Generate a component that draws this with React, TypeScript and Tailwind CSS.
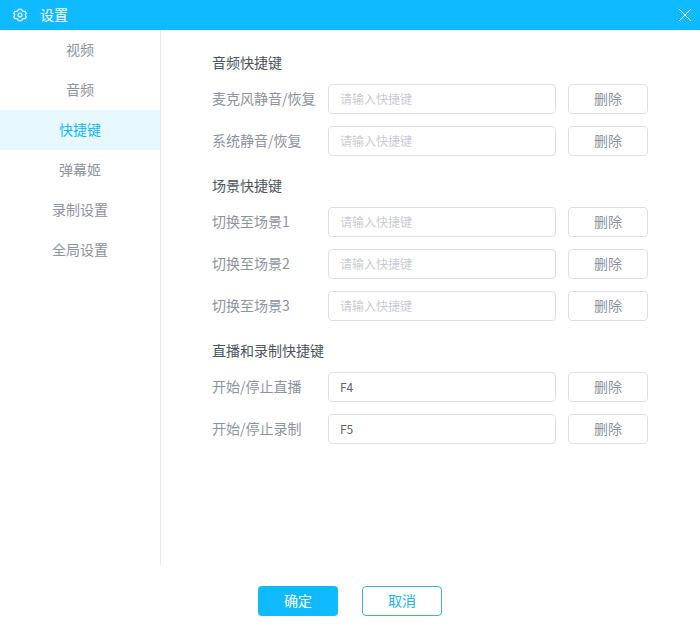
import { useState } from "react";

const FONT = "font-['Noto_Sans_CJK_SC','Liberation_Sans',sans-serif]";

const NAV_ITEMS = ["视频", "音频", "快捷键", "弹幕姬", "录制设置", "全局设置"];

const SECTIONS = [
  {
    title: "音频快捷键",
    rows: [
      { label: "麦克风静音/恢复", value: "" },
      { label: "系统静音/恢复", value: "" },
    ],
  },
  {
    title: "场景快捷键",
    rows: [
      { label: "切换至场景1", value: "" },
      { label: "切换至场景2", value: "" },
      { label: "切换至场景3", value: "" },
    ],
  },
  {
    title: "直播和录制快捷键",
    rows: [
      { label: "开始/停止直播", value: "F4" },
      { label: "开始/停止录制", value: "F5" },
    ],
  },
];

function GearIcon() {
  return (
    <svg width="14" height="14" viewBox="0 0 14 14" fill="none" stroke="white" strokeWidth="1.1" strokeLinejoin="round">
      <path d="M5.4 1.2h3.2l.5 1.5 1.5.8 1.5-.3 1.2 2.1L12.2 7l1.1 1.7-1.2 2.1-1.5-.3-1.5.8-.5 1.5H5.4l-.5-1.5-1.5-.8-1.5.3L.7 8.7 1.8 7 .7 5.3l1.2-2.1 1.5.3 1.5-.8z" />
      <circle cx="7" cy="7" r="2" />
    </svg>
  );
}

function ShortcutRow({ label, value }: { label: string; value: string }) {
  const [text, setText] = useState(value);
  return (
    <div className="flex h-[30px] items-center">
      <span className="w-[116px] shrink-0 whitespace-nowrap pb-[2px] text-[14px] text-[#8d949e]">{label}</span>
      <input
        type="text"
        value={text}
        onChange={(e) => setText(e.target.value)}
        placeholder="请输入快捷键"
        className="h-[30px] w-[228px] rounded-[4px] border border-[#dcdfe6] pb-[1px] pl-[11px] pr-[11px] text-[12px] text-[#606266] outline-none placeholder:text-[#c8ccd2]"
      />
      <button
        type="button"
        className="ml-3 h-[30px] w-[80px] rounded-[4px] border border-[#dcdfe6] bg-white pb-[2px] text-[14px] text-[#8d949e]"
      >
        删除
      </button>
    </div>
  );
}

export default function App() {
  return (
    <div className={`flex h-[640px] w-[700px] flex-col bg-white ${FONT}`}>
      <header className="flex h-[30px] shrink-0 items-center bg-[#10baff] pl-[13px] pr-[8px] text-white">
        <GearIcon />
        <span className="ml-[13px] pb-[1px] text-[14px]">设置</span>
        <svg className="ml-auto" width="14" height="14" viewBox="0 0 14 14" stroke="white" strokeWidth="1" fill="none">
          <path d="M1 1l12 12M13 1L1 13" />
        </svg>
      </header>

      <div className="flex h-[535px] shrink-0">
        <nav className="w-[161px] shrink-0 border-r border-[#e8eaed]">
          {NAV_ITEMS.map((item) => (
            <div
              key={item}
              className={`flex h-[40px] items-center justify-center pb-[2px] text-[14px] ${
                item === "快捷键" ? "bg-[#e8f8ff] text-[#10baff]" : "text-[#8d949e]"
              }`}
            >
              {item}
            </div>
          ))}
        </nav>

        <main className="flex flex-col gap-[20px] pl-[51px] pt-[23px]">
          {SECTIONS.map((section) => (
            <section key={section.title}>
              <h2 className="mb-[11px] pb-[2px] text-[14px] font-normal leading-[18px] text-[#4a5560]">{section.title}</h2>
              <div className="flex flex-col gap-3">
                {section.rows.map((row) => (
                  <ShortcutRow key={row.label} label={row.label} value={row.value} />
                ))}
              </div>
            </section>
          ))}
        </main>
      </div>

      <footer className="flex justify-center gap-6 pt-[21px]">
        <button type="button" className="h-[30px] w-[80px] rounded-[4px] bg-[#10baff] pb-[2px] text-[14px] text-white">
          确定
        </button>
        <button
          type="button"
          className="h-[30px] w-[80px] rounded-[4px] border border-[#3fb0dc] bg-white pb-[2px] text-[14px] text-[#22b2ee]"
        >
          取消
        </button>
      </footer>
    </div>
  );
}
